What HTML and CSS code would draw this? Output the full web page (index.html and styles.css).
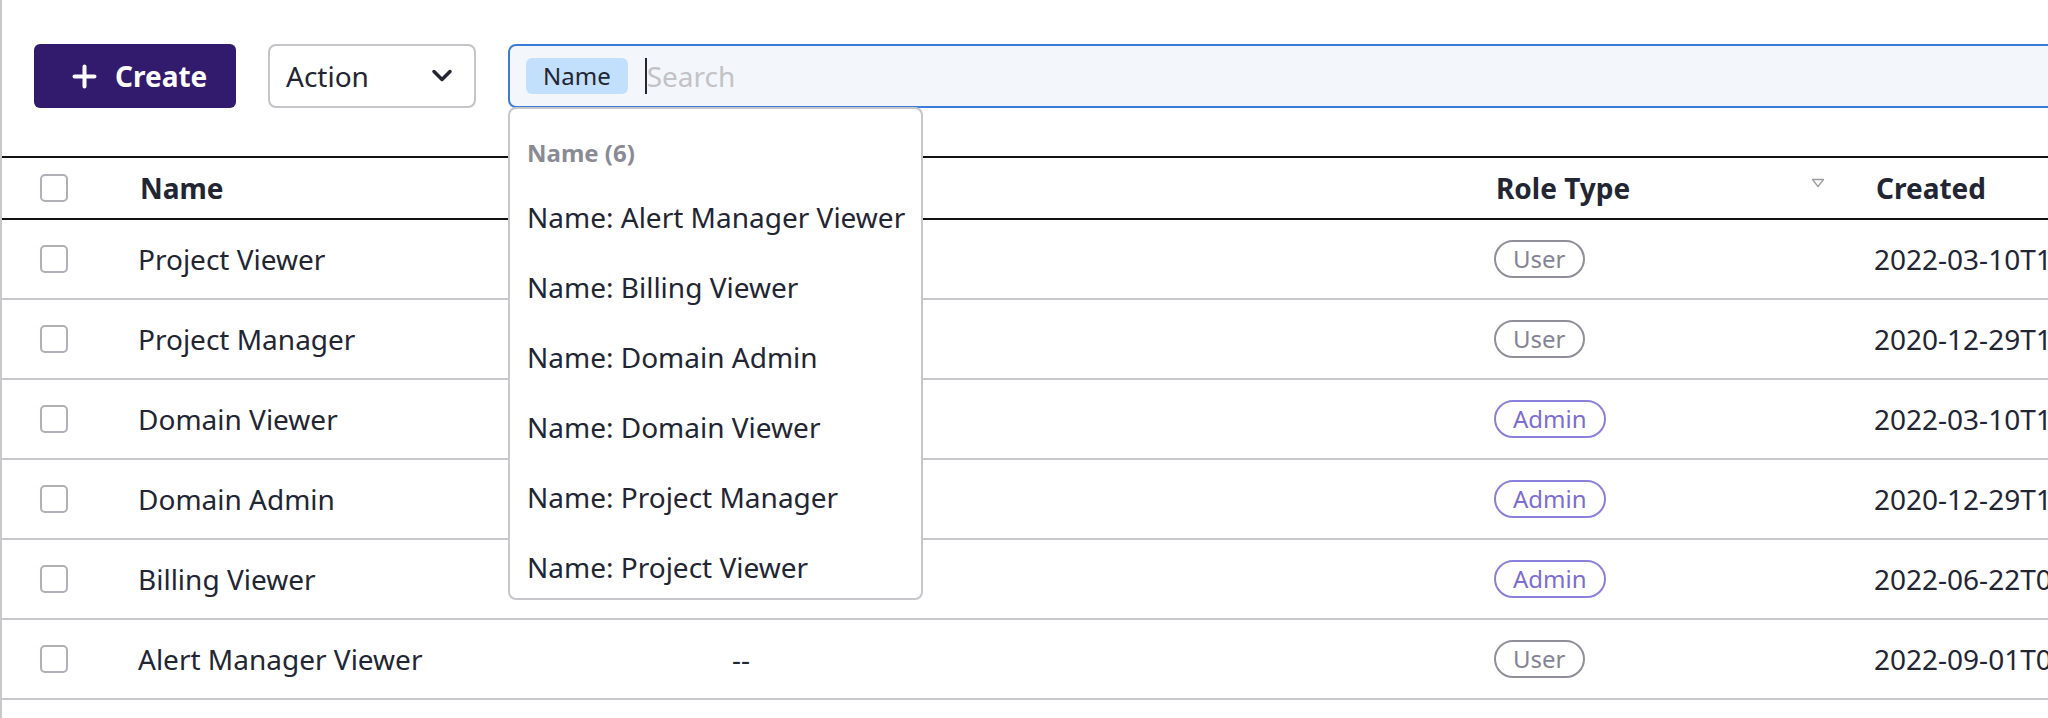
FILE: index.html
```html
<!DOCTYPE html>
<html lang="en">
<head>
<meta charset="utf-8">
<title>Roles</title>
<link rel="stylesheet" href="styles.css">
</head>
<body>
<div class="page">
  <div class="toolbar">
    <button class="btn-create">
      <svg class="plus" width="25" height="25" viewBox="0 0 25 25"><path d="M12.5 2.5v20M2.5 12.5h20" fill="none" stroke="#fff" stroke-width="4" stroke-linecap="round"/></svg>
      <span>Create</span>
    </button>
    <div class="select">
      <span>Action</span>
      <svg width="22" height="14" viewBox="0 0 22 14"><path d="M3 2.5l8 8 8-8" fill="none" stroke="#222532" stroke-width="3.5" stroke-linecap="round" stroke-linejoin="round"/></svg>
    </div>
    <div class="search">
      <span class="tag">Name</span>
      <span class="caret"></span>
      <span class="placeholder">Search</span>
      <div class="menu">
        <div class="menu-header">Name (6)</div>
        <div class="menu-item">Name: Alert Manager Viewer</div>
        <div class="menu-item">Name: Billing Viewer</div>
        <div class="menu-item">Name: Domain Admin</div>
        <div class="menu-item">Name: Domain Viewer</div>
        <div class="menu-item">Name: Project Manager</div>
        <div class="menu-item">Name: Project Viewer</div>
      </div>
    </div>
  </div>

  <div class="table">
    <div class="row head">
      <div class="cell check"><span class="checkbox"></span></div>
      <div class="cell">Name</div>
      <div class="cell"></div>
      <div class="cell sortable"><span>Role Type</span><svg width="14" height="10" viewBox="0 0 14 10"><path d="M1.5 1.5h11l-5.5 7z" fill="none" stroke="#9b9ba4" stroke-width="1.3" stroke-linejoin="round"/></svg></div>
      <div class="cell">Created</div>
    </div>
    <div class="row">
      <div class="cell check"><span class="checkbox"></span></div>
      <div class="cell">Project Viewer</div>
      <div class="cell desc"></div>
      <div class="cell"><span class="badge user">User</span></div>
      <div class="cell">2022-03-10T10:11:24Z</div>
    </div>
    <div class="row">
      <div class="cell check"><span class="checkbox"></span></div>
      <div class="cell">Project Manager</div>
      <div class="cell desc"></div>
      <div class="cell"><span class="badge user">User</span></div>
      <div class="cell">2020-12-29T10:07:43Z</div>
    </div>
    <div class="row">
      <div class="cell check"><span class="checkbox"></span></div>
      <div class="cell">Domain Viewer</div>
      <div class="cell desc"></div>
      <div class="cell"><span class="badge admin">Admin</span></div>
      <div class="cell">2022-03-10T10:11:24Z</div>
    </div>
    <div class="row">
      <div class="cell check"><span class="checkbox"></span></div>
      <div class="cell">Domain Admin</div>
      <div class="cell desc"></div>
      <div class="cell"><span class="badge admin">Admin</span></div>
      <div class="cell">2020-12-29T10:07:43Z</div>
    </div>
    <div class="row">
      <div class="cell check"><span class="checkbox"></span></div>
      <div class="cell">Billing Viewer</div>
      <div class="cell desc"></div>
      <div class="cell"><span class="badge admin">Admin</span></div>
      <div class="cell">2022-06-22T05:30:12Z</div>
    </div>
    <div class="row">
      <div class="cell check"><span class="checkbox"></span></div>
      <div class="cell">Alert Manager Viewer</div>
      <div class="cell desc">--</div>
      <div class="cell"><span class="badge user">User</span></div>
      <div class="cell">2022-09-01T04:18:55Z</div>
    </div>
  </div>
</div>
</body>
</html>
```

FILE: styles.css
```css
html, body {
  margin: 0;
  padding: 0;
  overflow: hidden;
  background: #ffffff;
}

body {
  font-family: "Noto Sans", "Open Sans", sans-serif;
  color: #222532;
  font-size: 28px;
}

.page {
  height: 718px;
  box-sizing: border-box;
  border-left: 2px solid #c8c8cc;
  overflow: hidden;
}

/* toolbar */
.toolbar {
  display: flex;
  align-items: flex-start;
  gap: 32px;
  padding: 44px 0 0 32px;
  height: 64px;
  margin-bottom: 48px;
}

.btn-create {
  display: flex;
  align-items: center;
  gap: 18px;
  box-sizing: border-box;
  width: 202px;
  height: 64px;
  padding: 0 30px 0 38px;
  border: none;
  border-radius: 6px;
  background: #321a6d;
  color: #ffffff;
  font-family: "Noto Sans", sans-serif;
  font-weight: 700;
  font-size: 28px;
  flex: none;
}

.plus {
  flex: none;
}

.select {
  display: flex;
  align-items: center;
  justify-content: space-between;
  box-sizing: border-box;
  width: 208px;
  height: 64px;
  padding: 0 21px 0 16px;
  border: 2px solid #c4c4c9;
  border-radius: 8px;
  background: #ffffff;
  flex: none;
}

.select svg {
  display: block;
}

.search {
  position: relative;
  flex: 1;
  margin-right: -40px;
  display: flex;
  align-items: center;
  box-sizing: border-box;
  height: 64px;
  padding-left: 16px;
  border: 2px solid #3a7bd9;
  border-radius: 8px;
  background: #f3f6fb;
}

.tag {
  height: 36px;
  line-height: 36px;
  padding: 0 17px;
  border-radius: 6px;
  background: #c2e0fb;
  font-size: 24px;
  color: #222532;
}

.caret {
  width: 2px;
  height: 36px;
  margin-left: 17px;
  background: #222532;
}

.placeholder {
  color: #c2c2c7;
  font-size: 28px;
}

/* dropdown menu */
.menu {
  position: absolute;
  left: -2px;
  top: 61px;
  z-index: 5;
  width: 415px;
  box-sizing: border-box;
  padding: 28px 0 0 17px;
  border: 2px solid #c6c6cb;
  border-radius: 8px;
  background: #ffffff;
}

.menu-header {
  font-size: 24px;
  font-weight: 700;
  line-height: 32px;
  color: #8a8a95;
  margin-bottom: 9px;
}

.menu-item {
  font-size: 28px;
  line-height: 38px;
  padding: 20px 0 12px;
  white-space: nowrap;
  color: #222532;
}

/* table */
.table {
  width: 2400px;
}

.row {
  display: grid;
  grid-template-columns: 104px 584px 772px 380px 1fr;
  height: 78px;
  border-bottom: 2px solid #c8c8cc;
}

.row.head {
  height: 60px;
  border-top: 2px solid #111111;
  border-bottom: 2px solid #111111;
  font-weight: 700;
}

.cell {
  display: flex;
  align-items: center;
  padding-left: 32px;
  white-space: nowrap;
}

.cell.desc {
  padding-left: 42px;
}

.row.head .cell {
  padding-left: 34px;
}

.row.head .cell.check,
.cell.check {
  padding-left: 38px;
}

.cell.sortable {
  justify-content: space-between;
  padding-right: 17px;
}

.cell.sortable svg {
  display: block;
  margin-bottom: 10px;
}

.checkbox {
  display: block;
  width: 28px;
  height: 28px;
  box-sizing: border-box;
  border: 2px solid #b0b0b8;
  border-radius: 5px;
  background: #ffffff;
}

.badge {
  display: inline-block;
  box-sizing: border-box;
  height: 38px;
  line-height: 34px;
  padding: 0 17px;
  border: 2px solid;
  border-radius: 19px;
  font-size: 24px;
  font-weight: 400;
}

.badge.user {
  border-color: #8f8f99;
  color: #858592;
}

.badge.admin {
  border-color: #8a7fdb;
  color: #7b6dd6;
}
```
